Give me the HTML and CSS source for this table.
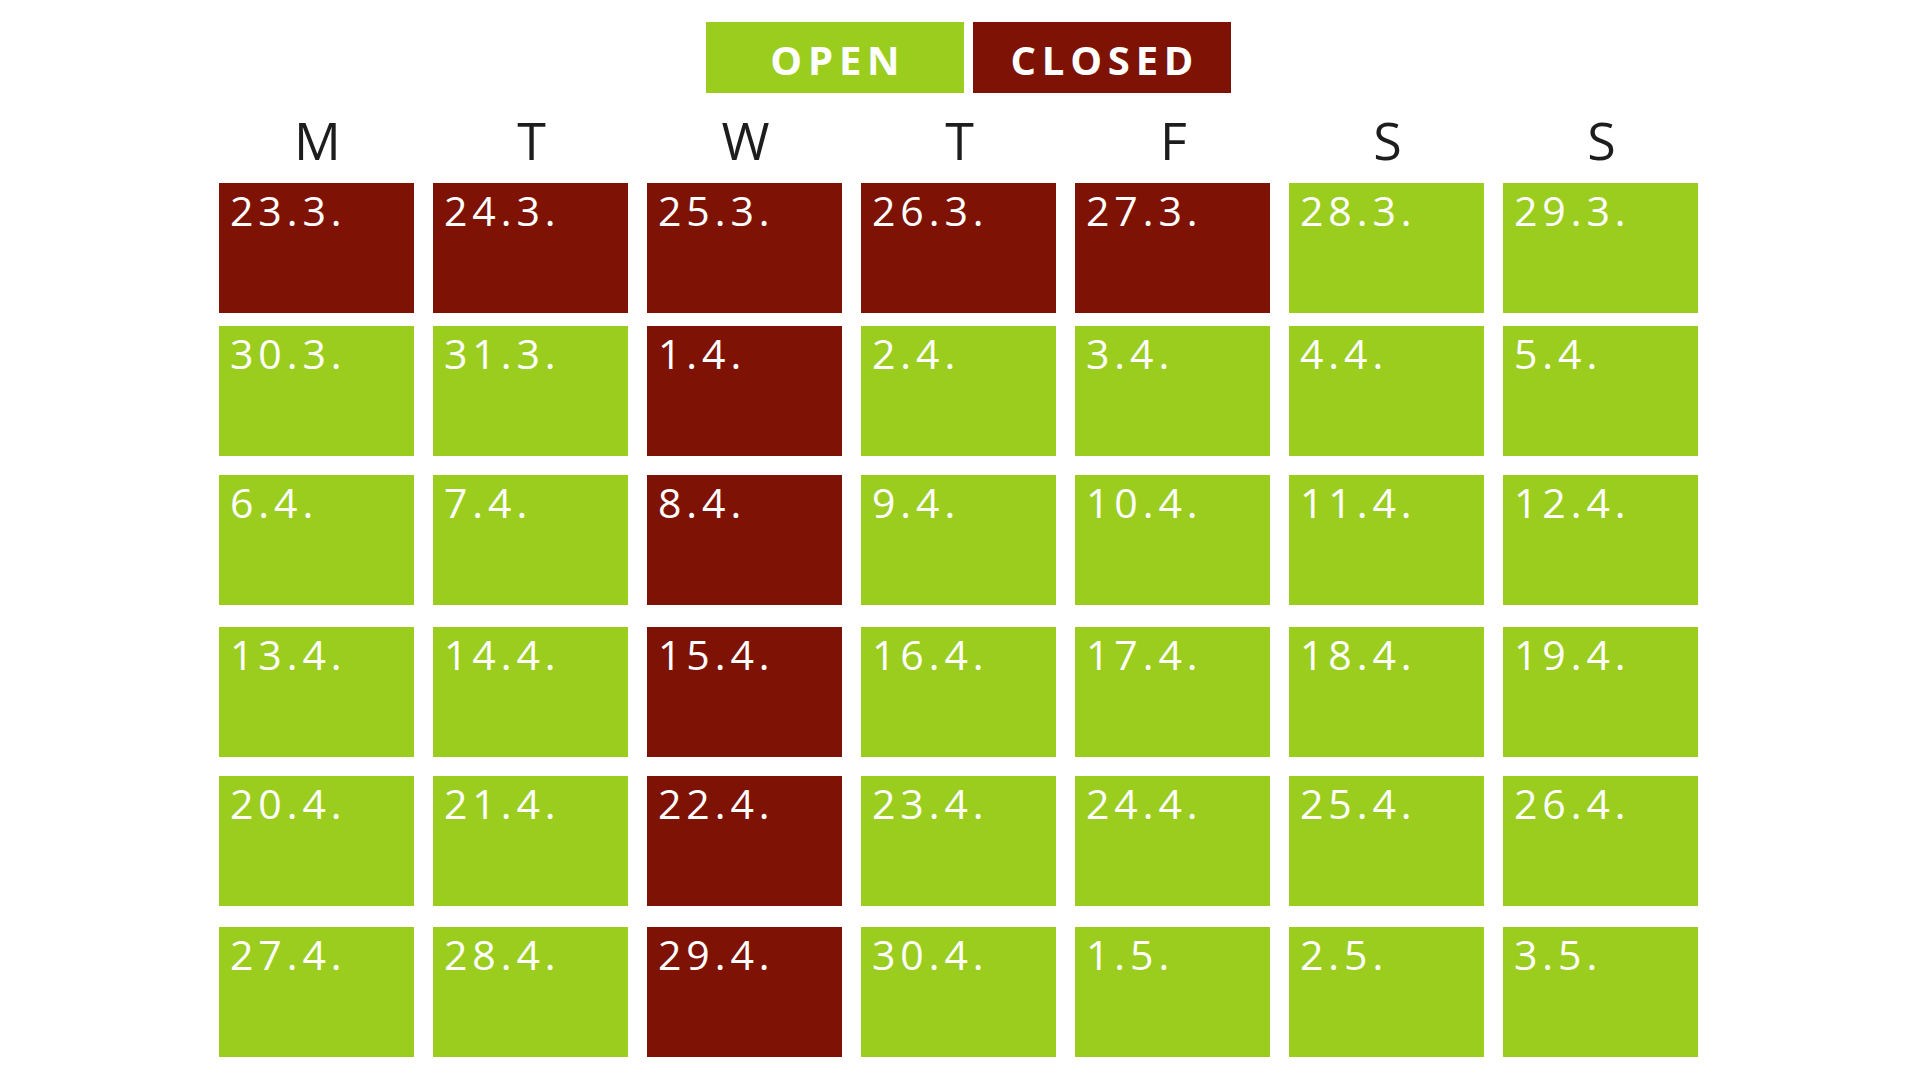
FILE: index.html
```html
<!DOCTYPE html>
<html lang="en">
<head>
<meta charset="utf-8">
<title>Opening calendar</title>
<link rel="stylesheet" href="styles.css">
</head>
<body>
<div class="page">
  <div class="legend">
    <div class="tag open">OPEN</div>
    <div class="tag closed">CLOSED</div>
  </div>
  <div class="calendar">
    <div class="days">
      <div class="day">M</div><div class="day">T</div><div class="day">W</div><div class="day">T</div><div class="day">F</div><div class="day">S</div><div class="day">S</div>
    </div>
    <div class="week w1">
      <div class="cell closed">23.3.</div><div class="cell closed">24.3.</div><div class="cell closed">25.3.</div><div class="cell closed">26.3.</div><div class="cell closed">27.3.</div><div class="cell open">28.3.</div><div class="cell open">29.3.</div>
    </div>
    <div class="week w2">
      <div class="cell open">30.3.</div><div class="cell open">31.3.</div><div class="cell closed">1.4.</div><div class="cell open">2.4.</div><div class="cell open">3.4.</div><div class="cell open">4.4.</div><div class="cell open">5.4.</div>
    </div>
    <div class="week w3">
      <div class="cell open">6.4.</div><div class="cell open">7.4.</div><div class="cell closed">8.4.</div><div class="cell open">9.4.</div><div class="cell open">10.4.</div><div class="cell open">11.4.</div><div class="cell open">12.4.</div>
    </div>
    <div class="week w4">
      <div class="cell open">13.4.</div><div class="cell open">14.4.</div><div class="cell closed">15.4.</div><div class="cell open">16.4.</div><div class="cell open">17.4.</div><div class="cell open">18.4.</div><div class="cell open">19.4.</div>
    </div>
    <div class="week w5">
      <div class="cell open">20.4.</div><div class="cell open">21.4.</div><div class="cell closed">22.4.</div><div class="cell open">23.4.</div><div class="cell open">24.4.</div><div class="cell open">25.4.</div><div class="cell open">26.4.</div>
    </div>
    <div class="week w6">
      <div class="cell open">27.4.</div><div class="cell open">28.4.</div><div class="cell closed">29.4.</div><div class="cell open">30.4.</div><div class="cell open">1.5.</div><div class="cell open">2.5.</div><div class="cell open">3.5.</div>
    </div>
  </div>
</div>
</body>
</html>
```
FILE: styles.css
```css
html, body {
  margin: 0;
  padding: 0;
  background: #ffffff;
}

.page {
  width: 1920px;
  height: 1080px;
  overflow: hidden;
  font-family: "Open Sans", "Noto Sans", "DejaVu Sans", sans-serif;
}

.legend {
  display: flex;
  justify-content: center;
  gap: 9px;
  padding-top: 22px;
  padding-left: 17px;
}

.tag {
  width: 258px;
  height: 71px;
  box-sizing: border-box;
  padding-top: 4px;
  display: flex;
  align-items: center;
  justify-content: center;
  color: #ffffff;
  font-weight: 700;
  font-size: 40px;
  letter-spacing: 0.145em;
  text-indent: 0.145em;
  line-height: 1;
}

.open {
  background: #9bcd1f;
}

.closed {
  background: #7e1204;
}

.calendar {
  width: 1479px;
  margin-left: 219px;
  margin-top: 21px;
}

.days {
  display: grid;
  grid-template-columns: repeat(7, 195px);
  column-gap: 19px;
  height: 52px;
}

.day {
  text-align: center;
  font-size: 52px;
  line-height: 1;
  color: #1d1d1d;
  padding-left: 2px;
}

.week {
  display: grid;
  grid-template-columns: repeat(7, 195px);
  column-gap: 19px;
}

.w1 { margin-top: 17px; }
.w2 { margin-top: 13px; }
.w3 { margin-top: 19px; }
.w4 { margin-top: 22px; }
.w5 { margin-top: 19px; }
.w6 { margin-top: 21px; }

.cell {
  height: 130px;
  box-sizing: border-box;
  padding: 7px 0 0 11px;
  color: #ffffff;
  font-size: 41px;
  line-height: 1;
  letter-spacing: 0.12em;
}
```
